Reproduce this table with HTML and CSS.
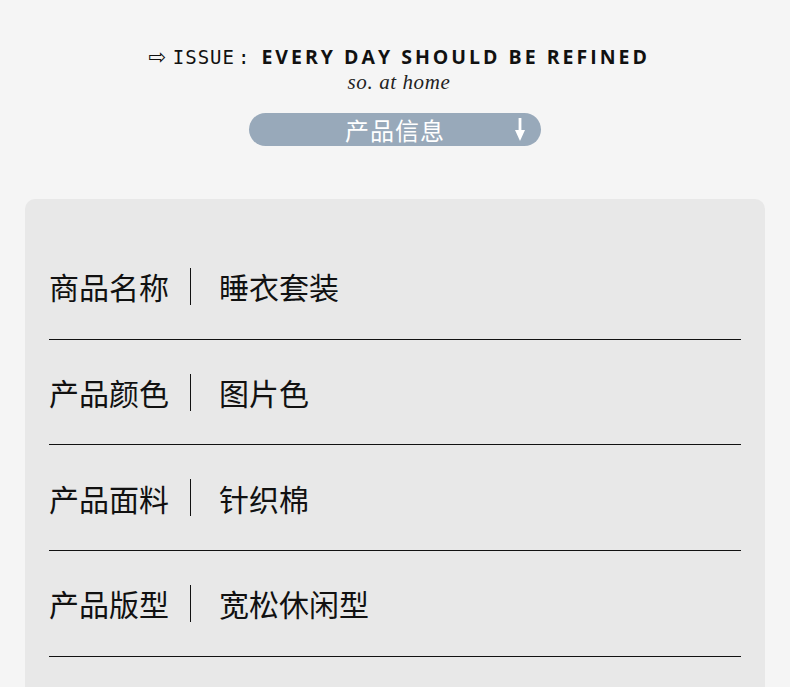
FILE: index.html
```html
<!DOCTYPE html>
<html lang="zh">
<head>
<meta charset="utf-8">
<link rel="stylesheet" href="styles.css">
</head>
<body>
<header class="head">
  <div class="titles">
    <div class="issue"><span class="arrow">⇨</span><span class="label">ISSUE<span class="colon">:</span></span><span class="motto">EVERY DAY SHOULD BE REFINED</span></div>
    <div class="sub">so. at home</div>
  </div>
  <div class="pill">
    <span class="pill-text">产品信息</span>
    <svg class="pill-arrow" width="12" height="24" viewBox="0 0 12 24"><rect x="4.6" y="0" width="2.8" height="13" fill="#fff"/><polygon points="1,12 11,12 6,23" fill="#fff"/></svg>
  </div>
</header>
<section class="card">
  <div class="row"><span class="key">商品名称</span><span class="sep"></span><span class="val">睡衣套装</span></div>
  <div class="row"><span class="key">产品颜色</span><span class="sep"></span><span class="val">图片色</span></div>
  <div class="row"><span class="key">产品面料</span><span class="sep"></span><span class="val">针织棉</span></div>
  <div class="row"><span class="key">产品版型</span><span class="sep"></span><span class="val">宽松休闲型</span></div>
</section>
</body>
</html>
```
FILE: styles.css
```css
html, body {
  margin: 0;
  padding: 0;
  background: #f5f5f5;
  height: 687px;
  overflow: hidden;
}
body {
  font-family: "Noto Sans CJK SC", "Noto Sans", sans-serif;
  color: #111;
}
.head {
  display: flex;
  flex-direction: column;
  align-items: center;
  padding-top: 44px;
}
.titles {
  display: flex;
  flex-direction: column;
  align-items: center;
  margin-left: 8px;
}
.issue {
  display: flex;
  align-items: baseline;
  height: 26px;
  line-height: 26px;
  color: #111;
}
.arrow {
  font-family: "DejaVu Sans", sans-serif;
  font-size: 21px;
  margin-right: 7px;
}
.label {
  font-family: "DejaVu Sans Mono", monospace;
  font-size: 19px;
  letter-spacing: 1px;
  margin-right: 11px;
}
.colon {
  margin-left: 3px;
}
.motto {
  font-family: "Open Sans", sans-serif;
  font-weight: 700;
  font-size: 19.5px;
  letter-spacing: 3px;
}
.sub {
  font-family: "Liberation Serif", serif;
  font-style: italic;
  font-size: 21px;
  line-height: 22px;
  color: #222;
  letter-spacing: 0.6px;
  margin-top: 1px;
}
.pill {
  margin-top: 20px;
  width: 292px;
  height: 33px;
  border-radius: 17px;
  background: #98a9ba;
  display: flex;
  align-items: center;
  justify-content: center;
  position: relative;
}
.pill-text {
  color: #fff;
  font-size: 24px;
  letter-spacing: 1px;
  line-height: 33px;
}
.pill-arrow {
  position: absolute;
  right: 15px;
  top: 5px;
}
.card {
  margin: 53px 25px 0 25px;
  background: #e8e8e8;
  border-radius: 10px;
  padding: 35px 24px 40px 24px;
  display: flex;
  flex-direction: column;
}
.row {
  height: 105.7px;
  border-bottom: 1px solid #111;
  display: flex;
  align-items: center;
  box-sizing: border-box;
  flex-shrink: 0;
}
.key, .val {
  font-size: 30px;
  line-height: 38px;
  color: #111;
}
.key {
  width: 141px;
}
.sep {
  width: 1px;
  height: 37px;
  background: #111;
  margin-right: 28px;
}
```
